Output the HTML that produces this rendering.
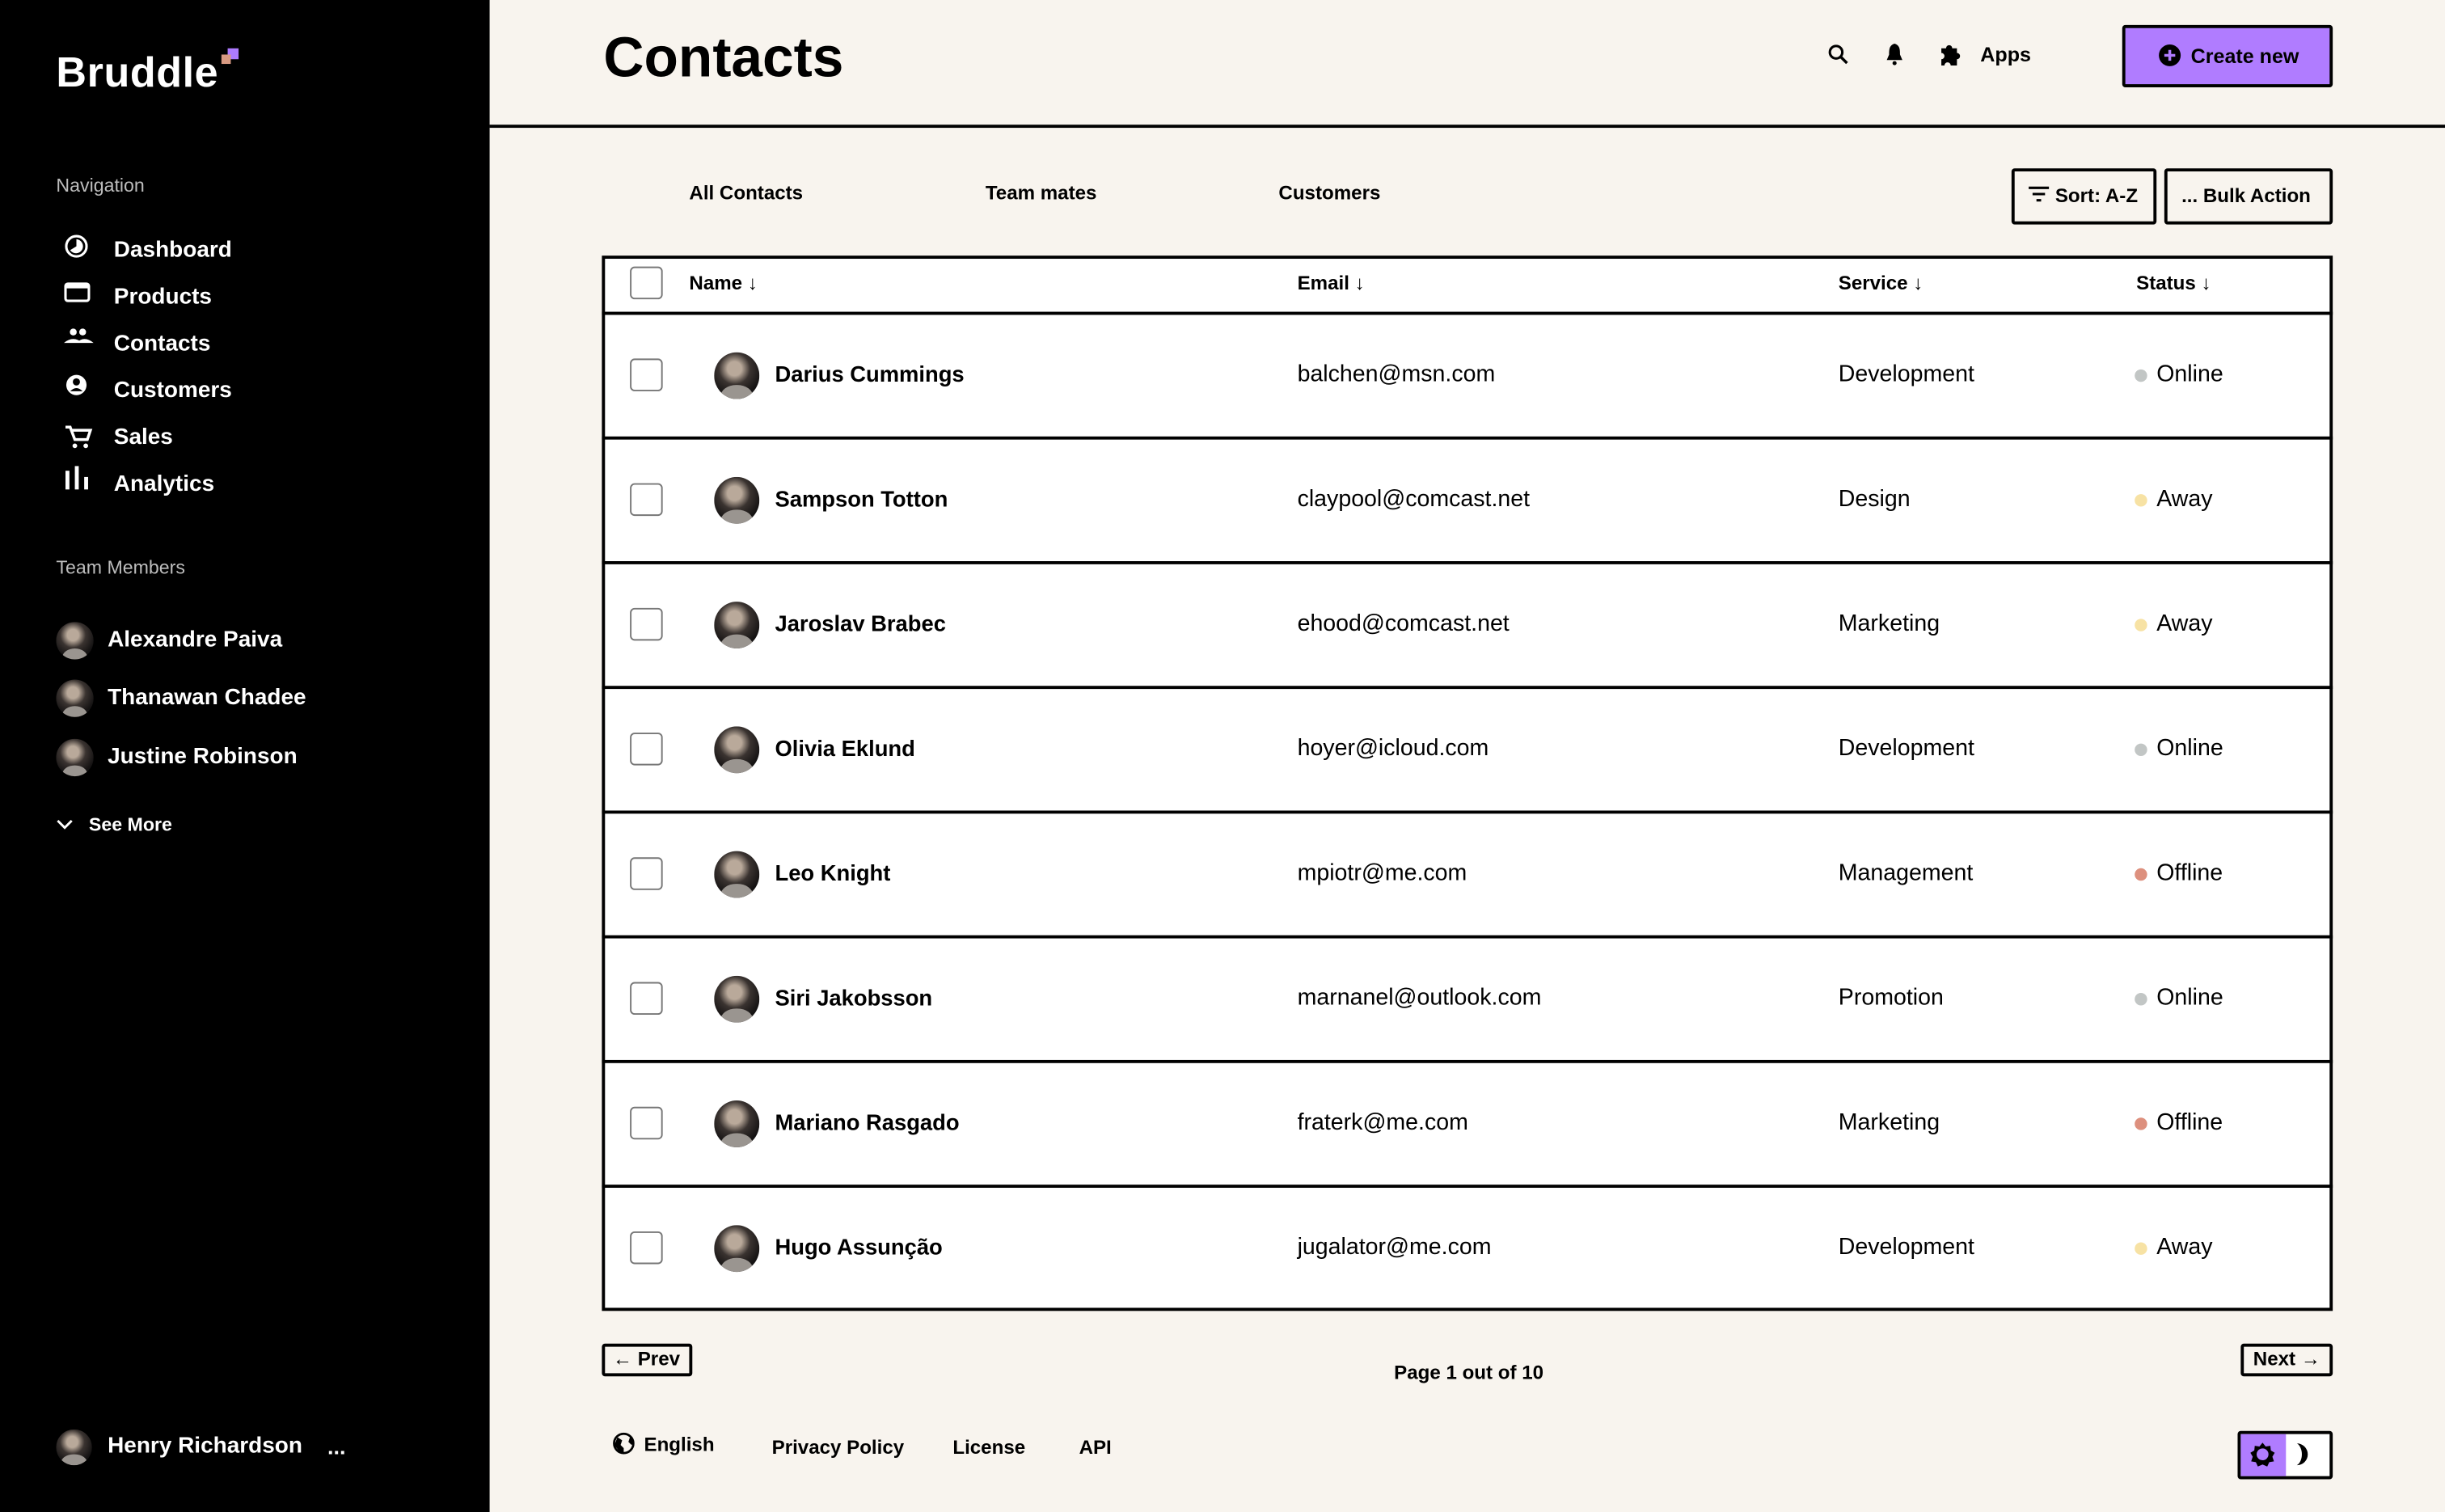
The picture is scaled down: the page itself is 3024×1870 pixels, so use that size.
<!DOCTYPE html>
<html><head><meta charset="utf-8"><style>
*{margin:0;padding:0;box-sizing:border-box}
html,body{width:3024px;height:1870px;overflow:hidden;background:#f8f4ee}
#s{position:absolute;left:0;top:0;width:1568px;height:970px;transform:scale(1.92857,1.92784);transform-origin:0 0;font-family:"Liberation Sans",Arial,sans-serif;color:#000;background:#f8f4ee}
.a{position:absolute}
.t{position:absolute;white-space:nowrap;transform:translateY(-50%);line-height:1}
.side{left:0;top:0;width:314px;height:970px;background:#000}
.w{color:#fff;font-weight:bold;font-size:14.5px}
.g{color:#bdbdbd;font-size:12px}
.av{position:absolute;border-radius:50%;background:radial-gradient(circle at 45% 35%,#b9a99a 0 18%,#3a3330 40%,#151313 70%),#222;overflow:hidden}
.av:after{content:"";position:absolute;left:15%;right:15%;bottom:-20%;height:50%;border-radius:50%;background:#9a9590}
.cb{position:absolute;width:21px;height:21px;border:1.5px solid #777;border-radius:3px;background:#fff}
.b{font-weight:bold}
.btn{position:absolute;border:2px solid #000;border-radius:2px}
.dot{position:absolute;width:8px;height:8px;border-radius:50%}
</style></head><body><div id="s">
<div class="a side"></div>
<div class="t" style="left:36px;top:47px;color:#fff;font-weight:bold;font-size:27px;letter-spacing:0.3px">Bruddle</div>
<div class="a" style="left:146px;top:31px;width:7px;height:7px;background:#ad7bff"></div>
<div class="a" style="left:142px;top:35px;width:6px;height:6px;background:#d99a82"></div>
<div class="t g" style="left:36px;top:119px">Navigation</div>
<svg class="a" style="left:40px;top:149px" width="20" height="180" viewBox="0 0 20 180" fill="#fff">
<circle cx="9" cy="9" r="6.5" fill="none" stroke="#fff" stroke-width="1.6"/><path d="M9 9 L9 4.5 A4.5 4.5 0 1 1 5 11.5Z"/>
<rect x="2" y="33" width="15" height="11" rx="1.5" fill="none" stroke="#fff" stroke-width="1.6"/><path d="M2 33 h15 v3 h-15z"/>
<circle cx="7" cy="64" r="2.2"/><circle cx="13" cy="64" r="2.2"/><path d="M1 71 q6-5 12 0z M9 71 q5-5 11 0z"/>
<circle cx="9" cy="98" r="6.5"/><circle cx="9" cy="96" r="2.3" fill="#000"/><path d="M5 102 q4-4 8 0" fill="#000"/>
<path d="M2 125 h3 l3 8 h8 l2-6 h-12" fill="none" stroke="#fff" stroke-width="1.8"/><circle cx="8" cy="137" r="1.5"/><circle cx="15" cy="137" r="1.5"/>
<rect x="2" y="153" width="2.5" height="12"/><rect x="8" y="150" width="2.5" height="15"/><rect x="14" y="157" width="2.5" height="8"/>
</svg>
<div class="t w" style="left:73px;top:161px">Dashboard</div>
<div class="t w" style="left:73px;top:191px">Products</div>
<div class="t w" style="left:73px;top:221px">Contacts</div>
<div class="t w" style="left:73px;top:251px">Customers</div>
<div class="t w" style="left:73px;top:281px">Sales</div>
<div class="t w" style="left:73px;top:311px">Analytics</div>
<div class="t g" style="left:36px;top:364px">Team Members</div>
<div class="av" style="left:36px;top:399px;width:24px;height:24px"></div>
<div class="t w" style="left:69px;top:411px">Alexandre Paiva</div>
<div class="av" style="left:36px;top:436px;width:24px;height:24px"></div>
<div class="t w" style="left:69px;top:448px">Thanawan Chadee</div>
<div class="av" style="left:36px;top:474px;width:24px;height:24px"></div>
<div class="t w" style="left:69px;top:486px">Justine Robinson</div>
<svg class="a" style="left:36px;top:525px" width="11" height="8"><path d="M1 1.5 L5.5 6 L10 1.5" fill="none" stroke="#fff" stroke-width="1.5"/></svg>
<div class="t" style="left:57px;top:529px;color:#fff;font-size:12px;font-weight:bold">See More</div>
<div class="av" style="left:36px;top:917px;width:23px;height:23px"></div>
<div class="t w" style="left:69px;top:928px">Henry Richardson</div>
<div class="t w" style="left:210px;top:928px;font-size:14px">...</div>

<div class="t b" style="left:387px;top:37px;font-size:36px">Contacts</div>
<div class="a" style="left:314px;top:80px;width:1254px;height:2px;background:#000"></div>
<svg class="a" style="left:1172px;top:28px" width="14" height="14"><circle cx="5.5" cy="5.5" r="4" fill="none" stroke="#000" stroke-width="1.6"/><path d="M8.5 8.5 L12.5 12.5" stroke="#000" stroke-width="1.8"/></svg>
<svg class="a" style="left:1208px;top:27px" width="14" height="16"><path d="M7 1 C3.5 2 3.5 5 3.5 8 L2 11.5 H12 L10.5 8 C10.5 5 10.5 2 7 1Z"/><circle cx="7" cy="13.5" r="1.3"/></svg>
<svg class="a" style="left:1243px;top:27px" width="16" height="16" viewBox="0 0 16 16"><path d="M2 4 h3 a2 2 0 1 1 4 0 h3 v3 a2 2 0 1 1 0 4 v4 h-4 a2 2 0 1 0 -4 0 H2 v-4 a2 2 0 1 0 0-4z"/></svg>
<div class="t b" style="left:1270px;top:35px;font-size:13px">Apps</div>
<div class="btn" style="left:1361px;top:16px;width:135px;height:40px;background:#b07cff"></div>
<svg class="a" style="left:1384px;top:28px" width="15" height="15"><circle cx="7.5" cy="7.5" r="7"/><path d="M7.5 4 v7 M4 7.5 h7" stroke="#b07cff" stroke-width="1.8"/></svg>
<div class="t b" style="left:1405px;top:36px;font-size:13px">Create new</div>

<div class="t b" style="left:442px;top:124px;font-size:12.5px">All Contacts</div>
<div class="t b" style="left:632px;top:124px;font-size:12.5px">Team mates</div>
<div class="t b" style="left:820px;top:124px;font-size:12.5px">Customers</div>
<div class="btn" style="left:1290px;top:108px;width:93px;height:36px"></div>
<svg class="a" style="left:1301px;top:119px" width="14" height="12"><path d="M0 1.5 h13 M2.5 5.5 h8 M5 9.5 h3" stroke="#000" stroke-width="1.6"/></svg>
<div class="t b" style="left:1318px;top:126px;font-size:12.5px">Sort: A-Z</div>
<div class="btn" style="left:1388px;top:108px;width:108px;height:36px"></div>
<div class="t b" style="left:1399px;top:126px;font-size:12.5px">... Bulk Action</div>

<div class="a" style="left:386px;top:164px;width:1110px;height:677px;background:#fff;border:2px solid #000"></div>
<div class="cb" style="left:404px;top:171px"></div>
<div class="t b" style="left:442px;top:182px;font-size:12.5px">Name ↓</div>
<div class="t b" style="left:832px;top:182px;font-size:12.5px">Email ↓</div>
<div class="t b" style="left:1179px;top:182px;font-size:12.5px">Service ↓</div>
<div class="t b" style="left:1370px;top:182px;font-size:12.5px">Status ↓</div>
<div id="rows"></div>

<div class="btn" style="left:386px;top:862px;width:58px;height:21px"></div>
<div class="t b" style="left:393px;top:872px;font-size:12.5px"><span style="font-weight:normal">←</span> Prev</div>
<div class="t b" style="left:894px;top:881px;font-size:12.5px">Page 1 out of 10</div>
<div class="btn" style="left:1437px;top:862px;width:59px;height:21px"></div>
<div class="t b" style="left:1445px;top:872px;font-size:12.5px">Next <span style="font-weight:normal">→</span></div>

<svg class="a" style="left:393px;top:919px" width="14" height="14" viewBox="0 0 14 14"><circle cx="7" cy="7" r="6.2" fill="none" stroke="#000" stroke-width="1.4"/><path d="M3 3 l3 2 -1 3 2 2 v3 l-3-1 -3-4z M8 1 l3 2 -1 3 2 2 1-1 -1-4z"/></svg>
<div class="t b" style="left:413px;top:927px;font-size:12.5px">English</div>
<div class="t b" style="left:495px;top:929px;font-size:12.5px">Privacy Policy</div>
<div class="t b" style="left:611px;top:929px;font-size:12.5px">License</div>
<div class="t b" style="left:692px;top:929px;font-size:12.5px">API</div>
<div class="btn" style="left:1435px;top:918px;width:61px;height:31px;background:#fff;overflow:hidden"><div class="a" style="left:0;top:0;width:29px;height:29px;background:#b07cff"></div></div>
<svg class="a" style="left:1442px;top:924px" width="18" height="18" viewBox="0 0 18 18"><path d="M9 1.5 l2 2.5 3 -0.5 0.3 3 2.5 1.5 -1.5 2.5 1 3 -3 0.5 -1.3 2.8 -3 -1.3 -3 1.3 -1.3 -2.8 -3 -0.5 1 -3 -1.5 -2.5 2.5 -1.5 0.3 -3 3 0.5z"/><circle cx="9" cy="9" r="3.8" fill="#b07cff"/></svg>
<svg class="a" style="left:1472px;top:925px" width="14" height="16" viewBox="0 0 14 16"><path d="M1 1 A7 7 0 1 1 1 15 A5 7.5 0 0 0 1 1Z"/></svg>
</div>
<script>
var d=[["Darius Cummings","balchen@msn.com","Development","Online"],["Sampson Totton","claypool@comcast.net","Design","Away"],["Jaroslav Brabec","ehood@comcast.net","Marketing","Away"],["Olivia Eklund","hoyer@icloud.com","Development","Online"],["Leo Knight","mpiotr@me.com","Management","Offline"],["Siri Jakobsson","marnanel@outlook.com","Promotion","Online"],["Mariano Rasgado","fraterk@me.com","Marketing","Offline"],["Hugo Assunção","jugalator@me.com","Development","Away"]];
var c={Online:"#c2c6c5",Away:"#f7e2a4",Offline:"#dd907e"},h="";
d.forEach(function(r,i){var y=201+i*80,m=y+40;
h+='<div class="a" style="left:386px;top:'+(y-1)+'px;width:1110px;height:2px;background:#000"></div>';
h+='<div class="cb" style="left:404px;top:'+(m-11)+'px"></div>';
h+='<div class="av" style="left:458px;top:'+(m-15)+'px;width:29px;height:30px"></div>';
h+='<div class="t b" style="left:497px;top:'+m+'px;font-size:14.2px">'+r[0]+'</div>';
h+='<div class="t" style="left:832px;top:'+m+'px;font-size:14.8px">'+r[1]+'</div>';
h+='<div class="t" style="left:1179px;top:'+m+'px;font-size:14.8px">'+r[2]+'</div>';
h+='<div class="dot" style="left:1369px;top:'+(m-4)+'px;background:'+c[r[3]]+'"></div>';
h+='<div class="t" style="left:1383px;top:'+m+'px;font-size:14.8px">'+r[3]+'</div>';});
document.getElementById("rows").outerHTML=h;
</script>
</body></html>
